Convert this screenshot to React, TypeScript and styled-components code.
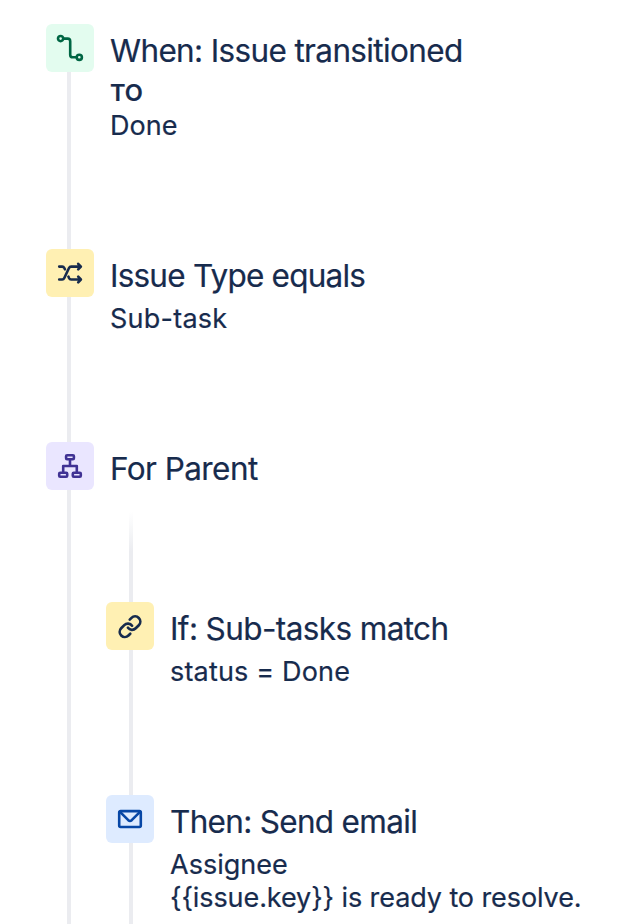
import React from 'react';
import styled, { createGlobalStyle } from 'styled-components';

const Global = createGlobalStyle`
  * { box-sizing: border-box; }
  body { margin: 0; background: #fff; overflow: hidden; }
`;

const Page = styled.main`
  width: 640px;
  height: 924px;
  overflow: hidden;
  padding: 24px 0 0 46px;
  background: #fff;
  color: #172b4d;
  font-family: Inter, sans-serif;
  -webkit-text-stroke: 0.2px currentColor;
`;

const Step = styled.section<{ $height: number }>`
  display: grid;
  grid-template-columns: 48px 1fr;
  height: ${(p) => p.$height}px;
`;

const Track = styled.div`
  display: flex;
  flex-direction: column;
`;

const Rail = styled.div<{ $inset: number }>`
  flex: 1;
  width: 4px;
  margin-left: ${(p) => p.$inset}px;
  background: #ebecf0;
`;

const FadeRail = styled.div`
  width: 4px;
  height: 90px;
  margin-left: 23px;
  background: linear-gradient(to bottom, #fff 0, #ebecf0 40px);
`;

const Tile = styled.div<{ $bg: string; $fg: string }>`
  display: flex;
  align-items: center;
  justify-content: center;
  width: 48px;
  height: 48px;
  flex: none;
  border-radius: 6px;
  background: ${(p) => p.$bg};
  color: ${(p) => p.$fg};
`;

const Glyph = styled.svg`
  width: 24px;
  height: 24px;
  overflow: visible;
  fill: none;
  stroke: currentColor;
  stroke-width: 2.6;
  stroke-linecap: round;
  stroke-linejoin: round;
`;

const Body = styled.div`
  padding-left: 16px;
`;

const Title = styled.h2<{ $track: number }>`
  margin: 0;
  font-size: 31.5px;
  font-weight: 400;
  line-height: 53px;
  white-space: nowrap;
  letter-spacing: ${(p) => p.$track}px;
`;

const Label = styled.p`
  margin: 0;
  font-size: 23.5px;
  font-weight: 600;
  line-height: 32px;
`;

const Line = styled.p<{ $track?: number }>`
  margin: 0;
  font-size: 27px;
  line-height: 33px;
  white-space: nowrap;
  letter-spacing: ${(p) => p.$track ?? 0}px;
`;

const Branch = styled.div`
  margin-top: 17px;
  padding-left: 12px;
`;

const TransitionIcon = () => (
  <Glyph viewBox="0 0 24 24">
    <circle cx="2.6" cy="2.6" r="2.6" />
    <circle cx="21.3" cy="21.3" r="2.6" />
    <path d="M5.4 2.6H9.6Q12.2 2.6 12.2 5.2V18.7Q12.2 21.3 14.8 21.3H18.5" />
  </Glyph>
);

const ShuffleIcon = () => (
  <Glyph viewBox="0 0 24 24">
    <path d="M1.2 5.6H4.2Q5.6 5.6 6.3 7L6.9 8.3M1.2 18.5H4.2Q5.6 18.5 6.3 17L11 7Q11.7 5.6 13.1 5.6H22.5M10.4 15.6L11 17Q11.7 18.5 13.1 18.5H22.5M20.2 2.8L22.9 5.6L20.2 8.4M20.2 15.7L22.9 18.5L20.2 21.3" />
  </Glyph>
);

const HierarchyIcon = () => (
  <Glyph viewBox="0 0 24 24">
    <rect x="8.1" y="1.2" width="7.8" height="4" rx="1" />
    <rect x="1.2" y="18.7" width="8" height="4" rx="1" />
    <rect x="14.8" y="18.7" width="8" height="4" rx="1" />
    <path d="M12 5.2V12M5.2 18V12H18.8V18" />
  </Glyph>
);

const LinkIcon = () => (
  <Glyph viewBox="0.4 -0.3 23.2 23.2">
    <path d="M10 13a5 5 0 0 0 7.54.54l3-3a5 5 0 0 0-7.07-7.07l-1.72 1.71M14 11a5 5 0 0 0-7.54-.54l-3 3a5 5 0 0 0 7.07 7.07l1.71-1.71" />
  </Glyph>
);

const MailIcon = () => (
  <Glyph viewBox="0 0 24 24">
    <rect x="1.2" y="4.1" width="21.6" height="15.9" rx="1.4" />
    <path d="M2 4.8L10.3 13.2Q12 14.7 13.7 13.2L22 4.8" />
  </Glyph>
);

export default function App() {
  return (
    <Page>
      <Global />
      <Step $height={225}>
        <Track>
          <Tile $bg="#e3fcef" $fg="#006644"><TransitionIcon /></Tile>
          <Rail $inset={21} />
        </Track>
        <Body>
          <Title $track={-0.64}>When: Issue transitioned</Title>
          <Label>TO</Label>
          <Line>Done</Line>
        </Body>
      </Step>
      <Step $height={193}>
        <Track>
          <Tile $bg="#fff0b3" $fg="#172b4d"><ShuffleIcon /></Tile>
          <Rail $inset={21} />
        </Track>
        <Body>
          <Title $track={-0.78}>Issue Type equals</Title>
          <Line $track={0.25}>Sub-task</Line>
        </Body>
      </Step>
      <Step $height={482}>
        <Track>
          <Tile $bg="#eae6ff" $fg="#403294"><HierarchyIcon /></Tile>
          <Rail $inset={21} />
        </Track>
        <div>
          <Body><Title $track={-0.57}>For Parent</Title></Body>
          <Branch>
            <FadeRail />
            <Step $height={193}>
              <Track>
                <Tile $bg="#fff0b3" $fg="#172b4d"><LinkIcon /></Tile>
                <Rail $inset={23} />
              </Track>
              <Body>
                <Title $track={-0.61}>If: Sub-tasks match</Title>
                <Line $track={0.17}>status = Done</Line>
              </Body>
            </Step>
            <Step $height={129}>
              <Track>
                <Tile $bg="#deebff" $fg="#0747a6"><MailIcon /></Tile>
                <Rail $inset={23} />
              </Track>
              <Body>
                <Title $track={-0.69}>Then: Send email</Title>
                <Line>Assignee</Line>
                <Line $track={-0.09}>{'{{issue.key}} is ready to resolve.'}</Line>
              </Body>
            </Step>
          </Branch>
        </div>
      </Step>
    </Page>
  );
}
